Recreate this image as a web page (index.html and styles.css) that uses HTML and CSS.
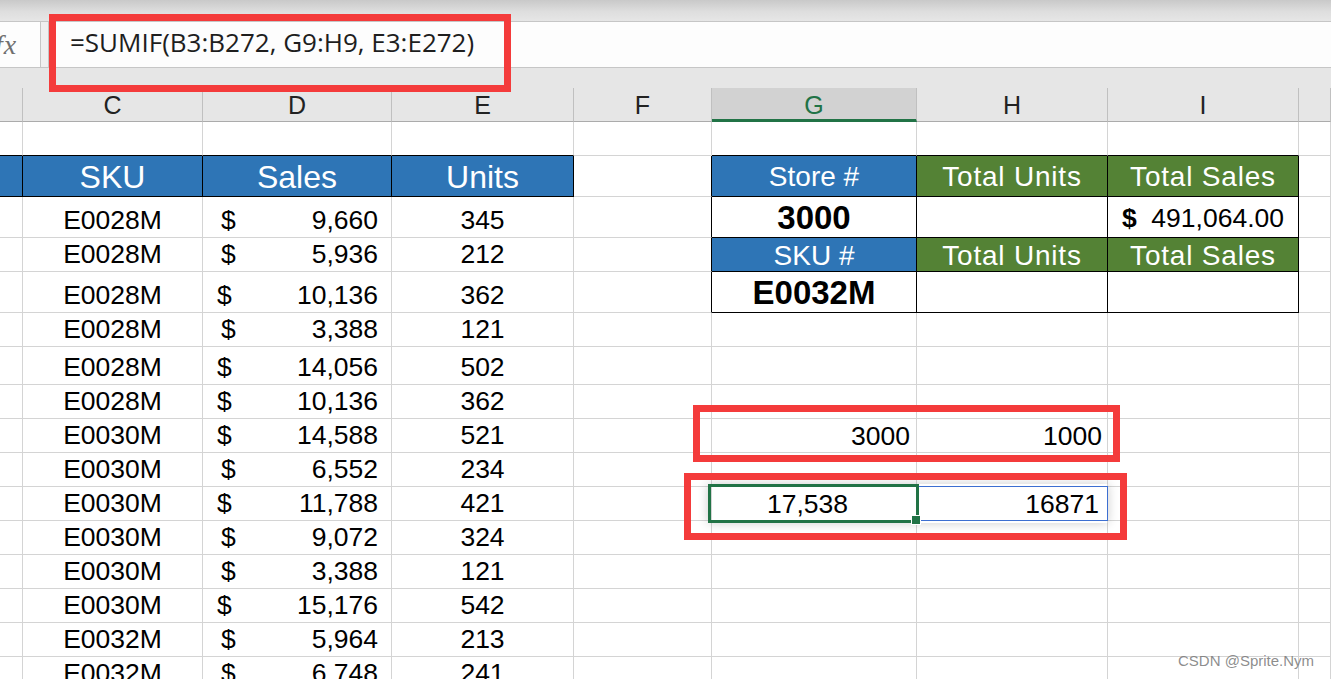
FILE: index.html
```html
<!DOCTYPE html>
<html>
<head>
<meta charset="utf-8">
<title>Excel SUMIF</title>
<link rel="stylesheet" href="styles.css">
</head>
<body>
<div class="app">
  <div class="topbar"></div>
  <div class="formula-bar">
    <div class="fx-box"><span class="fx">fx</span></div>
    <div class="fx-gap"></div>
    <div class="formula-input">=SUMIF(B3:B272, G9:H9, E3:E272)</div>
    <div class="annot annot-formula"></div>
  </div>
  <div class="col-headers">
    <div class="ch"></div>
    <div class="ch">C</div>
    <div class="ch">D</div>
    <div class="ch">E</div>
    <div class="ch">F</div>
    <div class="ch active">G</div>
    <div class="ch">H</div>
    <div class="ch">I</div>
    <div class="ch"></div>
  </div>
  <div class="sheet">
    <!-- row 1 -->
    <div class="c bb"></div><div class="c bb"></div><div class="c bb"></div><div class="c bb"></div><div class="c"></div><div class="c bb"></div><div class="c bb"></div><div class="c bb"></div><div class="c"></div>
    <!-- row 2 -->
    <div class="c th bb br"></div>
    <div class="c th bb br">SKU</div>
    <div class="c th bb br">Sales</div>
    <div class="c th bb br">Units</div>
    <div class="c br"></div>
    <div class="c rh blue bb br">Store #</div>
    <div class="c rh green bb br">Total Units</div>
    <div class="c rh green bb br">Total Sales</div>
    <div class="c"></div>
    <!-- row 3 -->
    <div class="c"></div><div class="c">E0028M</div><div class="c acc"><span>$</span><span>9,660</span></div><div class="c">345</div><div class="c br"></div>
    <div class="c big bb br">3000</div><div class="c bb br"></div><div class="c acc2 bb br"><span class="dol">$</span><span>491,064.00</span></div><div class="c"></div>
    <!-- row 4 -->
    <div class="c"></div><div class="c">E0028M</div><div class="c acc"><span>$</span><span>5,936</span></div><div class="c">212</div><div class="c br"></div>
    <div class="c rh blue bb br">SKU #</div><div class="c rh green bb br">Total Units</div><div class="c rh green bb br">Total Sales</div><div class="c"></div>
    <!-- row 5 -->
    <div class="c"></div><div class="c">E0028M</div><div class="c acc wide"><span>$</span><span>10,136</span></div><div class="c">362</div><div class="c br"></div>
    <div class="c big bb br">E0032M</div><div class="c bb br"></div><div class="c bb br"></div><div class="c"></div>
    <!-- row 6 -->
    <div class="c"></div><div class="c">E0028M</div><div class="c acc"><span>$</span><span>3,388</span></div><div class="c">121</div><div class="c"></div>
    <div class="c"></div><div class="c"></div><div class="c"></div><div class="c"></div>
    <!-- row 7 -->
    <div class="c"></div><div class="c">E0028M</div><div class="c acc wide"><span>$</span><span>14,056</span></div><div class="c">502</div><div class="c"></div>
    <div class="c"></div><div class="c"></div><div class="c"></div><div class="c"></div>
    <!-- row 8 -->
    <div class="c"></div><div class="c">E0028M</div><div class="c acc wide"><span>$</span><span>10,136</span></div><div class="c">362</div><div class="c"></div>
    <div class="c"></div><div class="c"></div><div class="c"></div><div class="c"></div>
    <!-- row 9 -->
    <div class="c"></div><div class="c">E0030M</div><div class="c acc wide"><span>$</span><span>14,588</span></div><div class="c">521</div><div class="c"></div>
    <div class="c num pr6">3000<div class="annot annot-crit"></div></div><div class="c num pr5">1000</div><div class="c"></div><div class="c"></div>
    <!-- row 10 -->
    <div class="c"></div><div class="c">E0030M</div><div class="c acc"><span>$</span><span>6,552</span></div><div class="c">234</div><div class="c"></div>
    <div class="c"></div><div class="c"></div><div class="c"></div><div class="c"></div>
    <!-- row 11 -->
    <div class="c"></div><div class="c">E0030M</div><div class="c acc wide"><span>$</span><span>11,788</span></div><div class="c">421</div><div class="c"></div>
    <div class="c num pr68 selected">17,538<div class="sel-shadow"></div><div class="sel"></div><div class="handle"></div><div class="annot annot-result"></div></div>
    <div class="c num pr8">16871<div class="range"></div></div><div class="c"></div><div class="c"></div>
    <!-- row 12 -->
    <div class="c"></div><div class="c">E0030M</div><div class="c acc"><span>$</span><span>9,072</span></div><div class="c">324</div><div class="c"></div>
    <div class="c"></div><div class="c"></div><div class="c"></div><div class="c"></div>
    <!-- row 13 -->
    <div class="c"></div><div class="c">E0030M</div><div class="c acc"><span>$</span><span>3,388</span></div><div class="c">121</div><div class="c"></div>
    <div class="c"></div><div class="c"></div><div class="c"></div><div class="c"></div>
    <!-- row 14 -->
    <div class="c"></div><div class="c">E0030M</div><div class="c acc wide"><span>$</span><span>15,176</span></div><div class="c">542</div><div class="c"></div>
    <div class="c"></div><div class="c"></div><div class="c"></div><div class="c"></div>
    <!-- row 15 -->
    <div class="c"></div><div class="c">E0032M</div><div class="c acc"><span>$</span><span>5,964</span></div><div class="c">213</div><div class="c"></div>
    <div class="c"></div><div class="c"></div><div class="c"></div><div class="c"></div>
    <!-- row 16 -->
    <div class="c"></div><div class="c">E0032M</div><div class="c acc"><span>$</span><span>6,748</span></div><div class="c">241</div><div class="c"></div>
    <div class="c"></div><div class="c"></div><div class="c"></div><div class="c"></div>
  </div>
  <div class="watermark">CSDN @Sprite.Nym</div>
</div>
</body>
</html>
```

FILE: styles.css
```css
* {
  box-sizing: border-box;
  margin: 0;
  padding: 0;
}

html, body {
  width: 1331px;
  height: 679px;
  overflow: hidden;
  background: #fff;
}

body {
  font-family: "Liberation Sans", Arial, sans-serif;
  color: #000;
}

.app {
  position: relative;
  width: 1331px;
  height: 679px;
  overflow: hidden;
  --cols: 23px 180px 189px 182px 138px 205px 191px 191px 1fr;
}

.topbar {
  height: 21px;
  background: linear-gradient(#c9c9c9, #dedede 55%, #e6e6e6);
}

.formula-bar {
  position: relative;
  height: 47px;
  display: flex;
  background: #e6e6e6;
  border-top: 1px solid #c6c6c6;
  border-bottom: 1px solid #c6c6c6;
}

.fx-box {
  width: 41px;
  background: #fdfdfd;
  border-right: 1px solid #c6c6c6;
  overflow: hidden;
  display: flex;
  align-items: center;
}

.fx {
  font-family: "Liberation Serif", "Times New Roman", serif;
  font-style: italic;
  font-size: 28px;
  color: #707070;
  margin-left: -5px;
  letter-spacing: 1px;
}

.fx-gap {
  width: 7px;
  background: #f0f0f0;
}

.formula-input {
  flex: 1;
  background: #fdfdfd;
  border-left: 1px solid #c6c6c6;
  padding: 3px 0 0 21px;
  font-family: "Open Sans", "Noto Sans", sans-serif;
  font-size: 26px;
  line-height: 35px;
  color: #1e1e1e;
}

.col-headers {
  height: 54px;
  padding-top: 20px;
  background: #e6e6e6;
  display: grid;
  grid-template-columns: var(--cols);
}

.ch {
  height: 34px;
  border-right: 1px solid #c0c0c0;
  border-bottom: 1px solid #ababab;
  font-size: 25px;
  color: #222;
  display: flex;
  align-items: center;
  justify-content: center;
  padding-top: 2px;
}

.ch.active {
  background: #d2d2d2;
  color: #217346;
  border-bottom: 3px solid #217346;
  padding-top: 4px;
}

.sheet {
  display: grid;
  grid-template-columns: var(--cols);
  grid-template-rows: 34px 41px 41px 34px 41px 34px 38px repeat(9, 34px);
}

.c {
  position: relative;
  border-right: 1px solid #d4d4d4;
  border-bottom: 1px solid #d4d4d4;
  font-size: 26.5px;
  line-height: 30px;
  display: flex;
  align-items: flex-end;
  justify-content: center;
  padding-bottom: 2px;
  white-space: nowrap;
  background: #fff;
}

.bb { border-bottom-color: #000; }
.br { border-right-color: #000; }

.th {
  background: #2e75b6;
  color: #fff;
  font-size: 32px;
  line-height: 36px;
  padding-bottom: 1px;
}

.rh {
  color: #fff;
  font-size: 28px;
  line-height: 32px;
  align-items: center;
  padding: 2px 0 0;
}

.blue { background: #2e75b6; }
.green {
  background: #548235;
  letter-spacing: 0.8px;
}

.big {
  font-weight: bold;
  font-size: 33px;
  align-items: center;
  padding: 2px 0 0;
}

.acc {
  justify-content: space-between;
  padding: 0 13px 2px 18px;
}

.acc.wide {
  padding-left: 14px;
}

.acc2 {
  justify-content: space-between;
  align-items: center;
  padding: 2px 14px 0 14px;
}

.dol { font-weight: bold; }

.num {
  justify-content: flex-end;
  padding-bottom: 1px;
}

.pr5 { padding-right: 5px; }
.pr6 { padding-right: 6px; }
.pr8 { padding-right: 8px; }
.pr68 { padding-right: 68px; }

.annot {
  position: absolute;
  border: 7px solid #f43b3b;
  pointer-events: none;
  z-index: 5;
}

.annot-formula {
  left: 49px;
  top: -8px;
  width: 462px;
  height: 78px;
}

.annot-crit {
  left: -19px;
  top: -14px;
  width: 427px;
  height: 57px;
}

.annot-result {
  left: -28px;
  top: -14px;
  width: 443px;
  height: 67px;
}

.sel-shadow {
  position: absolute;
  left: -4px;
  top: -3px;
  width: 400px;
  height: 39px;
  box-shadow: 0 0 10px rgba(0, 0, 0, 0.2);
  z-index: 1;
}

.sel {
  position: absolute;
  left: -4px;
  top: -3px;
  width: 211px;
  height: 39px;
  border: 3px solid #217346;
  z-index: 3;
}

.handle {
  position: absolute;
  left: 199px;
  top: 28px;
  width: 10px;
  height: 10px;
  background: #217346;
  border: 1px solid #fff;
  z-index: 4;
}

.range {
  position: absolute;
  left: 1px;
  top: -1px;
  width: 190px;
  height: 35px;
  border: 1px solid #3d6fd1;
  z-index: 2;
}

.watermark {
  position: absolute;
  left: 1178px;
  top: 652px;
  font-size: 15px;
  line-height: 17px;
  color: rgba(120, 120, 120, 0.85);
  z-index: 6;
}
```
